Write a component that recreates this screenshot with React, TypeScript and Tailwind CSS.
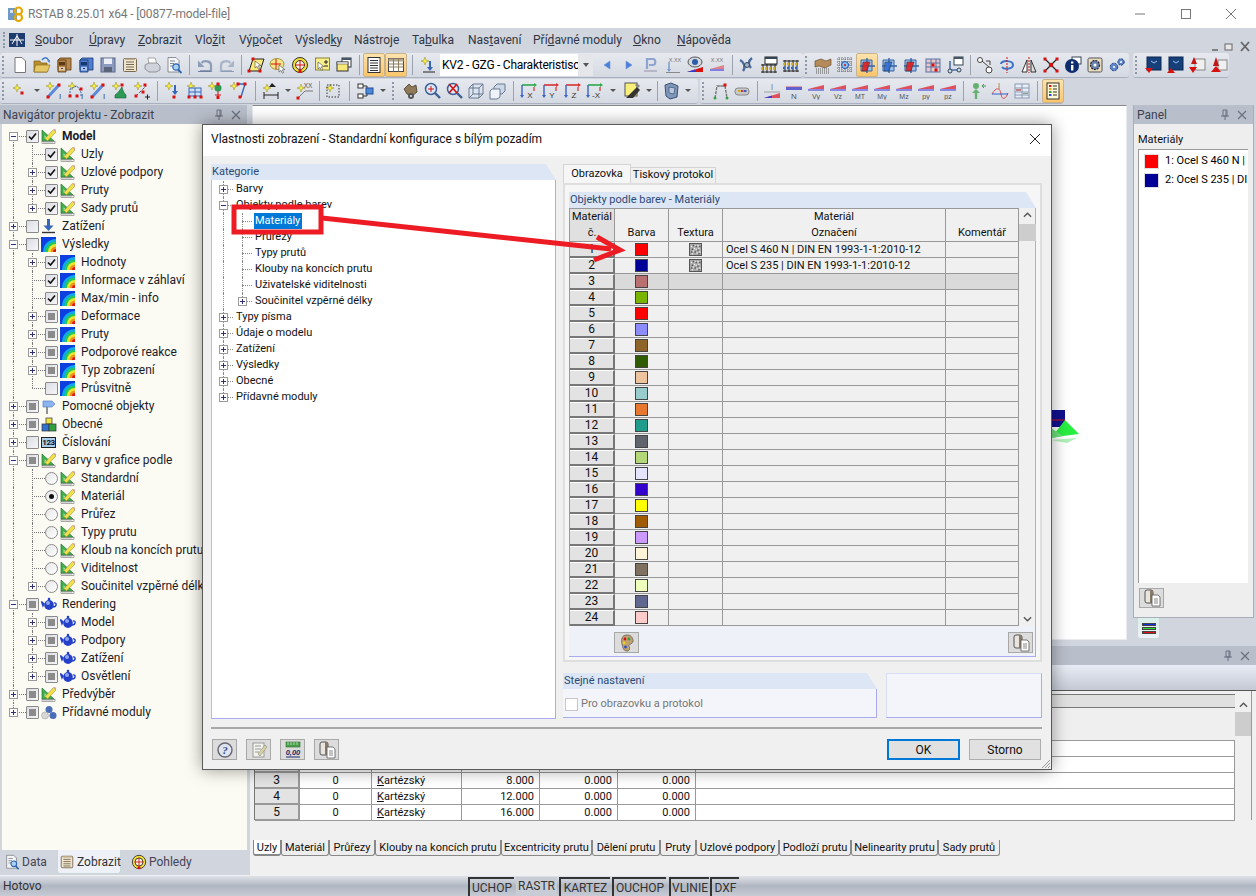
import type { ReactNode } from 'react';

const N = (x: number, y: number, c = '#d81010') => <rect x={x - 1.5} y={y - 1.5} width="3" height="3" fill={c} />;
const S = (x: number, y: number) => (
  <path
    d={`M${x} ${y - 4}L${x + 1} ${y - 1}L${x + 4} ${y}L${x + 1} ${y + 1}L${x} ${y + 4}L${x - 1} ${y + 1}L${x - 4} ${y}L${x - 1} ${y - 1}Z`}
    fill="#f8ee3c"
    stroke="#a39a3a"
    strokeWidth=".6"
  />
);
const T = (x: number, y: number, t: string, c = '#555', s = 7) => (
  <text x={x} y={y} fontSize={s} fill={c} textAnchor="middle" fontFamily="Liberation Sans, sans-serif">{t}</text>
);
const Cur = (x: number, y: number) => <path d={`M${x} ${y}l0 7l2-1.6l1.4 2.8l1.3-.7l-1.4-2.7l2.6-.3z`} fill="#fff" stroke="#444" strokeWidth=".6" />;
const Wedge = (c1 = '#e0505a', c2 = '#6a6ae0') => (
  <g>
    <path d="M1 7L17 3V7Z" fill={c1} />
    <path d="M1 7H17V9H1Z" fill={c2} opacity=".75" />
  </g>
);
const Force = (t: string) => (
  <g>
    {Wedge()}
    {T(9, 16.5, t, '#555', 7)}
  </g>
);
const Drawer = (c: string, d: string) => (
  <g>
    <path d="M5 2H16V14H3V4Z" fill={c} stroke={d} strokeWidth=".8" />
    <path d="M3 4H11V16H3Z" fill={c} stroke={d} strokeWidth=".8" />
    <rect x="4" y="6" width="6" height="3.5" fill={d} />
    <rect x="4" y="11" width="6" height="3.5" fill="#fff" opacity=".55" />
    <rect x="6" y="12" width="2" height="1" fill={d} />
  </g>
);
const Rot = (c: string) => (
  <g>
    <path d="M3 4H14V15H3Z" fill="#9cc0ea" stroke="#3465a4" />
    <path d="M9 2V17M2 10H17" stroke="#3465a4" strokeWidth="1.4" />
    <path d="M5 6H12L9 15H4Z" fill={c} opacity=".9" stroke="#222" strokeWidth=".5" />
  </g>
);
const Axis = (t: string, c: string) => (
  <g>
    <path d="M3 3H15" stroke={c} strokeWidth="1.6" />
    <path d="M15 1l3 2-3 2z" fill={c} />
    <path d="M3 3V14" stroke="#3b62c4" strokeWidth="1.4" />
    <path d="M1 13l2 3 2-3z" fill="#3b62c4" />
    <path d="M15 5V9" stroke="#d83030" strokeWidth="1.2" />
    {T(11, 16, t, '#333', 8)}
  </g>
);

const icons: Record<string, ReactNode> = {
  new: <path d="M4 1.5H11L14.5 5V16.5H4Z" fill="#fff" stroke="#777" />,
  open: (
    <g>
      <path d="M1 5H7L8 7H14V16H1Z" fill="#b98f2e" stroke="#7a5b16" strokeWidth=".7" />
      <path d="M2.5 9H17L14.5 16H1Z" fill="#e6c765" stroke="#8e6d20" strokeWidth=".7" />
      <path d="M9 4C11 1 14 1 15.5 4" stroke="#3a78c8" strokeWidth="1.5" fill="none" />
      <path d="M14 4.5l3-.5-.5 3z" fill="#3a78c8" />
    </g>
  ),
  chest: Drawer('#b8864b', '#5a3a12'),
  chestb: Drawer('#4f7fd0', '#17366f'),
  save: (
    <g>
      <rect x="2" y="2" width="14" height="14" fill="#8c9bc0" stroke="#5a6684" />
      <rect x="5" y="2.5" width="8" height="5.5" fill="#eef0f6" />
      <rect x="5" y="11" width="8" height="5" fill="#5b6478" />
    </g>
  ),
  note: (
    <g>
      <rect x="2.5" y="2.5" width="13" height="13" rx="1" fill="#efe4cf" stroke="#7a6a50" />
      <path d="M5 6H13M5 8.5H13M5 11H13M5 13.5H13" stroke="#7a6a50" />
      <path d="M4 2.5H14V4H4Z" fill="#bfae8f" />
    </g>
  ),
  print: (
    <g>
      <path d="M5 2H12L14 8H6Z" fill="#fff" stroke="#888" strokeWidth=".7" />
      <path d="M2 9L6 7H14L17 10V14L13 16H6L2 13Z" fill="#cfd2da" stroke="#777" strokeWidth=".7" />
    </g>
  ),
  preview: (
    <g>
      <path d="M3 1.5H11L14 4.5V16H3Z" fill="#f4f6fa" stroke="#777" strokeWidth=".8" />
      <path d="M5 5H10M5 7.5H9M5 10H8" stroke="#888" />
      <circle cx="11" cy="11" r="3.2" fill="#a9d2f5" stroke="#2c62b0" strokeWidth="1.2" />
      <path d="M13 13.5L16.5 17" stroke="#2c62b0" strokeWidth="1.8" />
    </g>
  ),
  undo: (
    <g>
      <path d="M4 15H15V9C15 5 8 4 5.5 7" stroke="#8d9db8" strokeWidth="2.2" fill="none" />
      <path d="M2 4.5V11H8.5Z" fill="#8d9db8" />
      <path d="M2 15.5H15" stroke="#6f7f9b" />
    </g>
  ),
  redo: (
    <g>
      <path d="M14 15H3V9C3 5 10 4 12.5 7" stroke="#a8b4c8" strokeWidth="2.2" fill="none" />
      <path d="M16 4.5V11H9.5Z" fill="#a8b4c8" />
      <path d="M3 15.5H16" stroke="#8e9cb4" />
    </g>
  ),
  para: (
    <g>
      <path d="M6 3H17L13 15H2Z" fill="#f7ea7a" stroke="#222" />
      {N(6, 3)}
      {N(2, 15)}
      {N(13, 15)}
      {Cur(8, 5)}
    </g>
  ),
  look1: (
    <g>
      <ellipse cx="8" cy="8" rx="7" ry="5.5" fill="#f6e88a" stroke="#a5973e" />
      <path d="M7 3V13M2 8H12" stroke="#d81010" />
      {Cur(10, 9)}
    </g>
  ),
  look2: (
    <g>
      <circle cx="9" cy="9" r="7.5" fill="#f4e034" stroke="#333" />
      <circle cx="9" cy="9" r="4.5" fill="#f6f6e8" stroke="#333" />
      <path d="M9 4V14M4 9H14" stroke="#d81010" />
      {N(9, 15.5)}
    </g>
  ),
  yplus: (
    <g>
      <rect x="2.5" y="2" width="14" height="12" fill="#f8ee8a" stroke="#8d8432" />
      {Cur(5, 6)}
      <path d="M11 6H15M13 4V8M11 10H15" stroke="#222" />
    </g>
  ),
  wins: (
    <g>
      <rect x="7" y="2" width="9" height="9" fill="#fff" stroke="#333" />
      <rect x="7" y="2" width="9" height="2" fill="#456" />
      <rect x="2" y="6" width="11" height="9" fill="#f6e97a" stroke="#333" />
      <rect x="2" y="6" width="11" height="2" fill="#fff" stroke="#333" strokeWidth=".5" />
    </g>
  ),
  list: (
    <g>
      <rect x="3" y="1.5" width="12" height="15" fill="#fff" stroke="#333" />
      <path d="M5 4.5H13M5 7H13M5 9.5H13M5 12H13M5 14.5H13" stroke="#333" />
    </g>
  ),
  grid: (
    <g>
      <rect x="1.5" y="2.5" width="15" height="13" fill="#fff" stroke="#444" />
      <rect x="1.5" y="2.5" width="15" height="3" fill="#b3a58e" />
      <path d="M1.5 8H16.5M1.5 11H16.5M6.5 2.5V15.5M11.5 2.5V15.5" stroke="#8a7a60" />
    </g>
  ),
  loadS: (
    <g>
      {S(6, 5)}
      <path d="M11 5V12" stroke="#3766b8" strokeWidth="2" />
      <path d="M8 11H14L11 15Z" fill="#3766b8" />
      <path d="M4 16H16" stroke="#222" />
    </g>
  ),
  left: <path d="M12 5V13L6 9Z" fill="#4a80e0" stroke="#6f93d0" strokeWidth=".6" />,
  right: <path d="M6 5V13L12 9Z" fill="#4a80e0" stroke="#6f93d0" strokeWidth=".6" />,
  pin: (
    <g>
      <path d="M5 13V3H11C14 3 14 9 11 9H7" stroke="#8ea6cf" strokeWidth="2.2" fill="none" />
      <path d="M2 15H15" stroke="#aab" strokeWidth="1.5" />
    </g>
  ),
  xxd: (
    <g>
      {T(11, 6, 'X.XX', '#777', 5.5)}
      <path d="M5 6V14" stroke="#7a9ad0" strokeWidth="1.5" />
      <path d="M3 13H7L5 16Z" fill="#7a9ad0" />
      <path d="M2 16.5H16" stroke="#888" />
    </g>
  ),
  eye: (
    <g>
      <ellipse cx="9" cy="6" rx="7" ry="5" fill="#d5d8e0" stroke="#555" />
      <circle cx="9" cy="6" r="3" fill="#2d5ca8" />
      <path d="M1 16L17 11V16Z" fill="#d81010" />
      <path d="M1 16L9 13.5V16Z" fill="#2d3fd0" />
    </g>
  ),
  xxw: (
    <g>
      {T(9, 6, 'X.XX', '#777', 5.5)}
      <path d="M2 13L16 9V13Z" fill="#e08088" />
      <path d="M2 13H16V15H2Z" fill="#8080e0" />
    </g>
  ),
  tube: (
    <g>
      <path d="M2 4C6 6 8 11 5 15M14 2C10 5 10 9 13 12" stroke="#4a6a9a" strokeWidth="2.4" fill="none" />
      <circle cx="9" cy="9" r="2.5" fill="#9ab0cf" stroke="#345" />
    </g>
  ),
  calc1: (
    <g>
      <rect x="5" y="1" width="12" height="7" fill="#fff" stroke="#222" />
      <rect x="5" y="1" width="12" height="2" fill="#345" />
      <path d="M1 9H17M1 16H17" stroke="#222" />
      <path d="M3 8V17M7 8V17M11 8V17M15 8V17" stroke="#222" />
      <path d="M1 12.5H17" stroke="#d8b020" strokeWidth="2.4" strokeDasharray="2 2" />
    </g>
  ),
  calc2: (
    <g>
      <path d="M1 5H17M1 15H17" stroke="#222" />
      <path d="M3 4V16M7 4V16M11 4V16M15 4V16" stroke="#222" />
      <path d="M1 8H17" stroke="#d8b020" strokeWidth="2.4" strokeDasharray="2 2" />
      <path d="M1 12H17" stroke="#3766b8" strokeWidth="2.4" strokeDasharray="2 2" />
    </g>
  ),
  hands: (
    <g>
      <path d="M1 5L7 3L12 5L17 3V9L11 12L5 10L1 11Z" fill="#b68b5a" stroke="#5c3d1c" strokeWidth=".6" />
      <path d="M2 13H16M2 15H16M2 17H16" stroke="#555" strokeDasharray="1 1" />
    </g>
  ),
  gridp: (
    <g>
      <path d="M1 3H17M1 6H17M1 9H17M1 12H17M1 15H17M3 1V17M6 1V17M9 1V17M12 1V17M15 1V17" stroke="#666" strokeDasharray="1 1" />
      <circle cx="9" cy="9" r="3.5" fill="#8cc0f0" stroke="#1f50b0" />
      <circle cx="9" cy="9" r="1" fill="#d81010" />
    </g>
  ),
  rot1: Rot('#e02020'),
  rot2: Rot('#3070d8'),
  rot3: Rot('#e02020'),
  rot4: (
    <g>
      <rect x="2" y="3" width="14" height="13" fill="#e6c8c8" stroke="#5a72a8" />
      <path d="M2 7H16M2 11H16M7 3V16M12 3V16" stroke="#5a72a8" />
      {N(9, 9)}
      {N(12, 14)}
    </g>
  ),
  rot5: (
    <g>
      <rect x="8" y="1" width="9" height="8" fill="#fff" stroke="#345" />
      <rect x="8" y="1" width="9" height="2" fill="#456" />
      <path d="M4 5V14H12" stroke="#4a6fb0" strokeWidth="1.6" fill="none" />
      <circle cx="4" cy="15" r="2" fill="#cdd" stroke="#345" />
      <circle cx="13" cy="14" r="2" fill="#cdd" stroke="#345" />
    </g>
  ),
  link: (
    <g>
      <circle cx="4" cy="4" r="2.5" fill="#fff" stroke="#444" />
      <circle cx="13" cy="14" r="3" fill="#fff" stroke="#444" />
      <path d="M6 5L13 11" stroke="#444" />
      <path d="M10 5H14V9" stroke="#444" fill="none" />
    </g>
  ),
  spin: (
    <g>
      <path d="M3 8C3 4 15 4 15 9C15 13 6 14 4 11" stroke="#3b74c8" strokeWidth="2" fill="none" />
      <path d="M9 1V17" stroke="#d81010" strokeDasharray="2 1" />
    </g>
  ),
  mirror: (
    <g>
      <path d="M7 4L2 16H7Z" fill="#fff" stroke="#333" />
      <path d="M11 4L16 16H11Z" fill="#ddd" stroke="#333" />
      <path d="M9 1V17" stroke="#d81010" strokeDasharray="2 1" />
    </g>
  ),
  cross: (
    <g>
      <path d="M3 3L15 15M15 3L3 15" stroke="#222" strokeWidth="1.2" />
      {N(3, 3)}
      {N(15, 3)}
      {N(3, 15)}
      {N(15, 15)}
      <circle cx="9" cy="9" r="2.2" fill="#d81010" />
    </g>
  ),
  info: (
    <g>
      <rect x="8" y="1" width="9" height="7" fill="#fff" stroke="#345" />
      <circle cx="8" cy="10" r="7" fill="#0f2d6e" />
      <rect x="7" y="9" width="2.4" height="5.5" fill="#fff" />
      <rect x="7" y="5.5" width="2.4" height="2" fill="#fff" />
    </g>
  ),
  gear: (
    <g>
      <rect x="2" y="2" width="14" height="14" rx="1.5" fill="#e8dcc0" stroke="#555" />
      <circle cx="9" cy="9" r="4.5" fill="#6a82b0" stroke="#222" strokeWidth="1.2" strokeDasharray="2 1" />
      <circle cx="9" cy="9" r="1.5" fill="#fff" />
    </g>
  ),
  gears: (
    <g>
      <circle cx="6" cy="11" r="3.8" fill="#5f86c8" stroke="#24447e" strokeDasharray="2 1" />
      <circle cx="13" cy="6" r="3.2" fill="#5f86c8" stroke="#24447e" strokeDasharray="2 1" />
      <circle cx="6" cy="11" r="1" fill="#fff" />
      <circle cx="13" cy="6" r="1" fill="#fff" />
    </g>
  ),
  iD: (
    <g>
      <rect x="3" y="1" width="14" height="13" fill="#173f7a" stroke="#0d2750" />
      <path d="M7 5L10 7L13 5" stroke="#9cc4f0" fill="none" />
      <path d="M1 12H9L5 17Z" fill="#d81010" />
    </g>
  ),
  iU: (
    <g>
      <rect x="3" y="1" width="14" height="13" fill="#173f7a" stroke="#0d2750" />
      <path d="M7 5L10 7L13 5" stroke="#9cc4f0" fill="none" />
      <path d="M1 17H9L5 12Z" fill="#d81010" />
    </g>
  ),
  pD: (
    <g>
      <rect x="7" y="3" width="10" height="11" fill="#f0f0f0" stroke="#888" />
      <path d="M6 1L9 8H3Z" fill="#c01818" />
      <path d="M1 11H9L5 17Z" fill="#d81010" />
    </g>
  ),
  pU: (
    <g>
      <rect x="8" y="4" width="9" height="10" fill="#f0f0f0" stroke="#888" />
      <path d="M6 1L9 10H3Z" fill="#c01818" />
      <path d="M1 16H11L6 10Z" fill="#d81010" />
    </g>
  ),
  s1: <g>{S(6, 6)}{N(11, 11)}</g>,
  beam: (
    <g>
      {S(5, 4)}
      <path d="M3 15L14 3" stroke="#5a8ad8" strokeWidth="3" />
      {N(3, 15)}
      {N(14, 3)}
      {T(15, 17, 'I', '#444', 8)}
    </g>
  ),
  nodes: (
    <g>
      {S(5, 4)}
      <path d="M3 14V7L10 4L14 10V14" stroke="#3766b8" fill="none" strokeDasharray="2 1" />
      {N(3, 14)}
      {N(10, 14)}
      {N(14, 7)}
      {T(15, 17, 'I', '#444', 8)}
    </g>
  ),
  green: (
    <g>
      {S(5, 4)}
      {N(11, 3)}
      <path d="M11 5C8 9 7 11 4 13V16H15V13C13 11 12 9 11 5Z" fill="#2c9a55" stroke="#17603a" strokeWidth=".6" />
    </g>
  ),
  sparkLine: (
    <g>
      {S(5, 4)}
      <path d="M3 14L13 4" stroke="#555" strokeDasharray="3 1.5" />
      {N(12, 3)}
      {N(3, 14)}
      {N(10, 10)}
      <path d="M12 15H17M14.5 12.5V17.5" stroke="#222" />
    </g>
  ),
  sLoad: (
    <g>
      {S(5, 4)}
      <path d="M11 3V10" stroke="#3766b8" strokeWidth="2" />
      <path d="M8 9H14L11 13Z" fill="#3766b8" />
      {N(10, 15)}
    </g>
  ),
  sFrame: (
    <g>
      {S(5, 4)}
      <rect x="3" y="6" width="12" height="8" fill="#cfe0f6" stroke="#3766b8" />
      <path d="M9 6V14M3 10H15" stroke="#3766b8" />
      {N(3, 15)}
      {N(9, 15)}
      {N(15, 15)}
    </g>
  ),
  sTree: (
    <g>
      {S(4, 4)}
      <circle cx="10" cy="6" r="3.5" fill="#2c9a55" />
      {N(10, 2)}
      <path d="M10 9V15M7 13H13" stroke="#d81010" />
      {N(10, 15.5)}
    </g>
  ),
  sColumn: (
    <g>
      {S(4, 4)}
      <path d="M8 2H15L11 15" stroke="#3766b8" fill="none" strokeWidth="1.4" />
      {N(8, 2)}
      {N(15, 2)}
      {N(10, 15)}
    </g>
  ),
  dim: (
    <g>
      {S(5, 6)}
      <path d="M2 10V17M16 10V17" stroke="#222" />
      <path d="M2 13H16" stroke="#222" />
      <path d="M10 1L14 5H7Z" fill="#222" />
    </g>
  ),
  sXX: (
    <g>
      {S(5, 6)}
      {T(12, 6, 'XX', '#555', 6.5)}
      <path d="M2 16L9 9H17" stroke="#777" fill="none" />
      {N(2, 16)}
    </g>
  ),
  sBox: (
    <g>
      {S(6, 6)}
      <rect x="3" y="3" width="12" height="12" fill="none" stroke="#333" strokeDasharray="1.5 1.5" />
    </g>
  ),
  flow: (
    <g>
      <rect x="1" y="2" width="5" height="4" fill="#fff" stroke="#333" />
      <rect x="1" y="12" width="5" height="4" fill="#fff" stroke="#333" />
      <path d="M6 4H10V7M6 14H10V11" stroke="#333" fill="none" />
      <rect x="9" y="6" width="7" height="6" fill="#4a8ad8" stroke="#244a94" />
    </g>
  ),
  hand: (
    <g>
      <path d="M3 7L8 2L11 5L15 3L16 10L11 14L6 12Z" fill="#8f7a5a" stroke="#3a2c18" strokeWidth=".7" />
      <circle cx="10" cy="14" r="3" fill="#555" />
      <circle cx="10" cy="14" r="1" fill="#eee" />
    </g>
  ),
  zoomRed: (
    <g>
      <circle cx="8" cy="7" r="5.5" fill="#dbe8f7" stroke="#3d5f96" strokeWidth="1.5" />
      <path d="M12 11L17 16" stroke="#3d5f96" strokeWidth="2.4" />
      <path d="M8 4V10M5 7H11" stroke="#d81010" />
    </g>
  ),
  zoomX: (
    <g>
      <circle cx="8" cy="7" r="5.5" fill="#dbe8f7" stroke="#3d5f96" strokeWidth="1.5" />
      <path d="M12 11L17 16" stroke="#3d5f96" strokeWidth="2.4" />
      <path d="M4 2L12 11M12 2L4 11" stroke="#d81010" strokeWidth="1.6" />
    </g>
  ),
  cube: (
    <g>
      <path d="M6 2H16V12L12 16H2V6Z" fill="#dce4ef" stroke="#6a7a90" />
      <path d="M6 2V12H16M6 12L2 16M2 6H12V16M12 6L16 2" fill="none" stroke="#6a7a90" />
    </g>
  ),
  cubes: (
    <g>
      <path d="M8 2H16V9L13 12H5V5Z" fill="#ccd8ea" stroke="#6a7a90" />
      <path d="M3 7H11V15L8 17H1V9Z" fill="#eef3f9" stroke="#6a7a90" />
    </g>
  ),
  ax: Axis('X', '#2fa84e'),
  ay: Axis('Y', '#d83030'),
  az: Axis('Z', '#d83030'),
  amx: Axis('-X', '#2fa84e'),
  paint: (
    <g>
      <rect x="2" y="1" width="12" height="13" fill="#f8ee7a" stroke="#555" />
      <path d="M3 16L14 5L17 8L10 16Z" fill="#333" />
      <path d="M14 1L17 4L15 6L12 3Z" fill="#888" />
    </g>
  ),
  seat: (
    <g>
      <path d="M3 3L9 1L16 4L15 15L8 17L4 14Z" fill="#7f97b8" stroke="#3a5072" />
      <path d="M7 5L13 6L12 12L7 11Z" fill="#b9c7da" stroke="#3a5072" strokeWidth=".7" />
    </g>
  ),
  frame: (
    <g>
      <path d="M4 16L6 4H14L16 16" stroke="#777" fill="none" strokeWidth="1.4" strokeDasharray="3 1" />
      <path d="M6 4H14" stroke="#999" strokeWidth="1.4" />
      {N(14, 3)}
      <circle cx="4" cy="16" r="1.5" fill="#3aa04a" />
      <circle cx="16" cy="16" r="1.5" fill="#3aa04a" />
    </g>
  ),
  tag: (
    <g>
      <rect x="2" y="6" width="14" height="7" rx="3" fill="#c8c8c8" stroke="#888" />
      <rect x="5" y="8" width="2.5" height="2" fill="#d8b020" />
      <rect x="8" y="8" width="2.5" height="2" fill="#c04040" />
      <rect x="11" y="8" width="2.5" height="2" fill="#4060c0" />
    </g>
  ),
  dI: (
    <g>
      {T(9, 8, 'I', '#888', 9)}
      <path d="M1 16L17 11V16Z" fill="#e0505a" />
      <path d="M1 16L9 13.5V16Z" fill="#4040d0" />
      <path d="M1 10H17" stroke="#a0a0a0" />
    </g>
  ),
  dN: (
    <g>
      <rect x="1" y="4" width="16" height="2" fill="#e08088" opacity=".7" />
      <rect x="1" y="5" width="16" height="3" fill="#6060d0" />
      {T(9, 16.5, 'N', '#555', 8)}
    </g>
  ),
  vy: Force('Vy'),
  vz: Force('Vz'),
  mt: Force('MT'),
  my: Force('My'),
  mz: Force('Mz'),
  py: Force('py'),
  pz: Force('pz'),
  greenUp: (
    <g>
      <circle cx="7" cy="4" r="3" fill="#66b070" />
      <path d="M13 4H17M13 4l2-2M13 4l2 2" stroke="#449955" fill="none" />
      <path d="M7 8V17" stroke="#66b070" strokeWidth="2.4" />
      <path d="M3 11L7 7L11 11Z" fill="#66b070" />
    </g>
  ),
  wave: (
    <g>
      {T(8, 7, 'I', '#888', 9)}
      <path d="M1 12C5 5 9 5 10 12S15 17 17 11" stroke="#d85050" fill="none" />
      <path d="M1 12H17" stroke="#3060d0" />
    </g>
  ),
  table: (
    <g>
      <rect x="2" y="2" width="14" height="14" fill="#e8eef7" stroke="#8a9ab2" />
      <path d="M2 6H16M2 10H16M2 13H16M9 2V16" stroke="#8a9ab2" />
      <rect x="3" y="7" width="5" height="2" fill="#c08080" />
      <rect x="10" y="11" width="5" height="1" fill="#80a080" />
    </g>
  ),
  legend: (
    <g>
      <rect x="3" y="1" width="12" height="16" fill="#fff8d8" stroke="#333" />
      <rect x="5" y="3" width="2.5" height="2" fill="#d81010" />
      <rect x="5" y="6" width="2.5" height="2" fill="#e8a020" />
      <rect x="5" y="9" width="2.5" height="2" fill="#30a040" />
      <rect x="5" y="12" width="2.5" height="2" fill="#2050d0" />
      <path d="M9 4H13M9 7H13M9 10H13M9 13H13" stroke="#333" />
    </g>
  ),
};

const sepW: Record<string, string> = {
  s5: 'w-[5px]',
  s6: 'w-[6px]',
  s7: 'w-[7px]',
  s8: 'w-[8px]',
  s9: 'w-[9px]',
  s10: 'w-[10px]',
  s11: 'w-[11px]',
};
const dropW: Record<string, string> = {
  d10: 'w-[10px]',
  d11: 'w-[11px]',
  d12: 'w-[12px]',
  d16: 'w-[16px]',
};

function ToolItems({ items }: { items: string[] }) {
  return (
    <>
      {items.map((it, i) => {
        if (sepW[it]) {
          return (
            <div key={i} className={`${sepW[it]} h-[20px] flex justify-center shrink-0`}>
              <div className="w-px h-full bg-[#9aa2b0]" />
            </div>
          );
        }
        if (dropW[it]) {
          return (
            <div key={i} className={`${dropW[it]} h-[22px] flex items-center justify-center shrink-0`}>
              <div className="w-0 h-0 border-x-[3px] border-x-transparent border-t-[3px] border-t-[#555]" />
            </div>
          );
        }
        if (it === 'grip') {
          return (
            <div key={i} className="w-[6px] ml-[2px] mr-px h-[20px] flex flex-col justify-center gap-[2px] shrink-0">
              {[0, 1, 2, 3, 4].map((n) => (
                <div key={n} className="w-[2px] h-[2px] bg-[#8f97a6]" />
              ))}
            </div>
          );
        }
        const active = it.startsWith('*');
        const name = active ? it.slice(1) : it;
        return (
          <div
            key={i}
            className={`w-[22px] h-[24px] flex items-center justify-center shrink-0 ${
              active ? 'bg-gradient-to-b from-[#fde3ad] to-[#fbc56a] border border-[#c9b38a] rounded-[2px]' : ''
            }`}
          >
            <svg viewBox="0 0 18 18" className="w-[18px] h-[18px]">
              {icons[name]}
            </svg>
          </div>
        );
      })}
    </>
  );
}

const Band = ({ w, children }: { w: string; children: ReactNode }) => (
  <div className={`${w} h-[25px] flex items-center bg-gradient-to-b from-[#e6e9ef] to-[#d5d9e2] border-b border-[#aab0bd] rounded-[3px] shrink-0`}>
    {children}
  </div>
);

function Toolbars() {
  return (
    <div className="flex flex-col">
      <div className="flex h-[26px] items-center">
        <Band w="w-[803px]">
          <ToolItems items={['grip', 'new', 'open', 'chest', 'chestb', 'save', 'note', 'print', 'preview', 's9', 'undo', 'redo', 's7', 'para', 'look1', 'look2', 'yplus', 'wins', 's8', '*list', '*grid', 's10', 'loadS']} />
          <div className="w-[153px] h-[22px] ml-px flex items-center bg-white shrink-0 overflow-hidden">
            <div className="w-[138px] pl-[2px] text-[12px] tracking-[-0.25px] text-black whitespace-nowrap overflow-hidden shrink-0">KV2 - GZG - Charakteristisc</div>
            <div className="w-[15px] h-full bg-[#e4e6ea] flex items-center justify-center">
              <div className="w-0 h-0 border-x-[3px] border-x-transparent border-t-[4px] border-t-[#555]" />
            </div>
          </div>
          <div className="w-[3px] shrink-0" />
          <ToolItems items={['left', 'right', 'pin', 'xxd', 'eye', 'xxw', 's8', 'tube', 'calc1', 'calc2']} />
        </Band>
        <Band w="w-[326px]">
          <ToolItems items={['grip', 'hands', 'gridp', '*rot1', 'rot2', 'rot3', 'rot4', 'rot5', 's8', 'link', 'spin', 'mirror', 'cross', 'info', 'gear', 'gears']} />
        </Band>
        <div className="w-[4px] shrink-0" />
        <Band w="w-[96px]">
          <ToolItems items={['grip', 'iD', 'iU', 'pD', 'pU']} />
        </Band>
      </div>
      <div className="flex h-[26px] items-center">
        <Band w="w-[698px]">
          <ToolItems items={['grip', 's1', 'd12', 'beam', 'nodes', 'beam', 'green', 'sparkLine', 's9', 'sLoad', 'sFrame', 'sTree', 'sColumn', 's10', 'dim', 'd12', 'sXX', 's6', 'sBox', 's11', 'flow', 'd11']} />
          <div className="w-[2px] shrink-0" />
          <ToolItems items={['grip', 'hand', 'zoomRed', 'zoomX', 'cube', 'cubes', 's8', 'ax', 'ay', 'az', 'amx', 'd16', 'paint', 'd12', 's5', 'seat', 'd12']} />
        </Band>
        <div className="w-[2px] shrink-0" />
        <Band w="w-[363px]">
          <ToolItems items={['grip', 'frame', 'tag', 's8', 'dI', 'dN', 'vy', 'vz', 'mt', 'my', 'mz', 'py', 'pz', 's8', 'greenUp', 'wave', 'table', 's9', '*legend']} />
        </Band>
      </div>
    </div>
  );
}

const Pencil = () => (
  <svg viewBox="0 0 15 16" className="w-[15px] h-[16px] shrink-0">
    <path d="M1 2V13H13Z" fill="#3fae4b" stroke="#2a7a34" strokeWidth=".7" />
    <path d="M3.5 7V11H7.5Z" fill="#a5dca8" />
    <path d="M4 10.5L12.5 1.5L15 4L6.5 13Z" fill="#f2e04a" stroke="#8d8432" strokeWidth=".5" />
    <path d="M12.5 1.5L15 4L15.500 2.500L14 1Z" fill="#e59ab0" />
    <rect x="1" y="13.5" width="13" height="2" fill="#fff" stroke="#555" strokeWidth=".5" />
    <path d="M3 13.5V15M5 13.5V15M7 13.5V15M9 13.5V15M11 13.5V15" stroke="#555" strokeWidth=".5" />
  </svg>
);
const Rainbow = () => (
  <svg viewBox="0 0 15 15" className="w-[15px] h-[15px] shrink-0">
    <rect width="15" height="15" fill="#0c3ee0" />
    <circle cx="15" cy="15" r="13" fill="#10a8e8" />
    <circle cx="15" cy="15" r="10.5" fill="#22c85a" />
    <circle cx="15" cy="15" r="8" fill="#e8e830" />
    <circle cx="15" cy="15" r="5.5" fill="#f09020" />
    <circle cx="15" cy="15" r="3" fill="#e01818" />
  </svg>
);
const Teapot = () => (
  <svg viewBox="0 0 16 14" className="w-[16px] h-[14px] shrink-0">
    <ellipse cx="8" cy="8" rx="4.8" ry="5" fill="#2440c8" />
    <ellipse cx="7" cy="6" rx="2" ry="2" fill="#8fa4ee" />
    <path d="M3 7L0.5 4.5L2 9ZM13 6C16 5 16 10 12 10" fill="none" stroke="#2440c8" strokeWidth="1.4" />
    <circle cx="8" cy="2" r="1.3" fill="#2440c8" />
  </svg>
);
const LoadIco = () => (
  <svg viewBox="0 0 15 15" className="w-[15px] h-[15px] shrink-0">
    <path d="M7.5 0V8" stroke="#3766b8" strokeWidth="3" />
    <path d="M2.5 6.5H12.5L7.5 12Z" fill="#3766b8" />
    <path d="M1 13.5H14" stroke="#333" strokeWidth="1.4" />
  </svg>
);
const SignIco = () => (
  <svg viewBox="0 0 15 15" className="w-[15px] h-[15px] shrink-0">
    <path d="M2 2H11L14 5L11 8H2Z" fill="#8cb4f0" stroke="#5a7ec0" strokeWidth=".7" />
    <path d="M6 8V15" stroke="#777" strokeWidth="1.6" />
  </svg>
);
const BlocksIco = () => (
  <svg viewBox="0 0 16 15" className="w-[16px] h-[15px] shrink-0">
    <rect x="5" y="1" width="6" height="6" fill="#f0e040" stroke="#333" strokeWidth=".7" />
    <rect x="1" y="7" width="7" height="7" fill="#3070d0" stroke="#333" strokeWidth=".7" />
    <rect x="8" y="7" width="7" height="7" fill="#30a040" stroke="#333" strokeWidth=".7" />
  </svg>
);
const NumIco = () => (
  <div className="w-[15px] h-[11px] shrink-0 bg-[#a9cdec] border border-[#222] text-[8px] leading-[9px] font-bold text-[#111] text-center tracking-[-0.5px] overflow-hidden">123</div>
);
const AddonIco = () => (
  <svg viewBox="0 0 16 15" className="w-[16px] h-[15px] shrink-0">
    <circle cx="8" cy="4.5" r="3.5" fill="#4a6fb8" />
    <circle cx="4" cy="10.5" r="3.5" fill="#d8d8d8" stroke="#999" strokeWidth=".5" />
    <circle cx="12" cy="10.5" r="3.5" fill="#4a6fb8" />
  </svg>
);

const Expander = ({ open }: { open?: boolean }) => (
  <div className="w-[9px] h-[9px] border border-[#9a9a9a] bg-white flex items-center justify-center relative shrink-0">
    <div className="w-[5px] h-px bg-[#30307a]" />
    {!open && <div className="absolute w-px h-[5px] bg-[#30307a]" />}
  </div>
);

const Check = ({ kind }: { kind: string }) => {
  if (kind === 'r' || kind === 'R') {
    return (
      <div className="w-[13px] h-[13px] rounded-full border border-[#8a8a8a] bg-gradient-to-br from-[#e6e6e6] to-white flex items-center justify-center shrink-0">
        {kind === 'R' && <div className="w-[5px] h-[5px] rounded-full bg-[#111]" />}
      </div>
    );
  }
  return (
    <div className="w-[13px] h-[13px] border border-[#8a8a8a] rounded-[1px] bg-gradient-to-br from-[#dcdde4] to-[#f6f6f8] flex items-center justify-center shrink-0">
      {kind === 'c' && (
        <svg viewBox="0 0 11 11" className="w-[11px] h-[11px]">
          <path d="M2 5.5L4.5 8L9 2.5" stroke="#111" strokeWidth="1.6" fill="none" />
        </svg>
      )}
      {kind === 'i' && <div className="w-[7px] h-[7px] bg-[#8b8b8b]" />}
    </div>
  );
};

type NavRow = { l: 0 | 1; t: string; c: string; i: string; e?: '+' | '-'; last?: boolean; b?: boolean };

const navRows: NavRow[] = [
  { l: 0, t: 'Model', c: 'c', i: 'p', e: '-', b: true },
  { l: 1, t: 'Uzly', c: 'c', i: 'p' },
  { l: 1, t: 'Uzlové podpory', c: 'c', i: 'p', e: '+' },
  { l: 1, t: 'Pruty', c: 'c', i: 'p', e: '+' },
  { l: 1, t: 'Sady prutů', c: 'c', i: 'p', e: '+', last: true },
  { l: 0, t: 'Zatížení', c: 'e', i: 'l', e: '+' },
  { l: 0, t: 'Výsledky', c: 'e', i: 'a', e: '-' },
  { l: 1, t: 'Hodnoty', c: 'c', i: 'a', e: '+' },
  { l: 1, t: 'Informace v záhlaví', c: 'c', i: 'a' },
  { l: 1, t: 'Max/min - info', c: 'c', i: 'a' },
  { l: 1, t: 'Deformace', c: 'i', i: 'a', e: '+' },
  { l: 1, t: 'Pruty', c: 'i', i: 'a', e: '+' },
  { l: 1, t: 'Podporové reakce', c: 'i', i: 'a', e: '+' },
  { l: 1, t: 'Typ zobrazení', c: 'i', i: 'a', e: '+' },
  { l: 1, t: 'Průsvitně', c: 'e', i: 'a', last: true },
  { l: 0, t: 'Pomocné objekty', c: 'i', i: 's', e: '+' },
  { l: 0, t: 'Obecné', c: 'i', i: 'b', e: '+' },
  { l: 0, t: 'Číslování', c: 'e', i: 'n', e: '+' },
  { l: 0, t: 'Barvy v grafice podle', c: 'i', i: 'p', e: '-' },
  { l: 1, t: 'Standardní', c: 'r', i: 'p' },
  { l: 1, t: 'Materiál', c: 'R', i: 'p' },
  { l: 1, t: 'Průřez', c: 'r', i: 'p' },
  { l: 1, t: 'Typy prutu', c: 'r', i: 'p' },
  { l: 1, t: 'Kloub na koncích prutu', c: 'r', i: 'p' },
  { l: 1, t: 'Viditelnost', c: 'r', i: 'p' },
  { l: 1, t: 'Součinitel vzpěrné délky', c: 'r', i: 'p', e: '+', last: true },
  { l: 0, t: 'Rendering', c: 'i', i: 't', e: '-' },
  { l: 1, t: 'Model', c: 'i', i: 't', e: '+' },
  { l: 1, t: 'Podpory', c: 'i', i: 't', e: '+' },
  { l: 1, t: 'Zatížení', c: 'i', i: 't', e: '+' },
  { l: 1, t: 'Osvětlení', c: 'i', i: 't', e: '+', last: true },
  { l: 0, t: 'Předvýběr', c: 'i', i: 'p', e: '+' },
  { l: 0, t: 'Přídavné moduly', c: 'i', i: 'm', e: '+', last: true },
];

const navIcon = (i: string) => {
  if (i === 'p') return <Pencil />;
  if (i === 'a') return <Rainbow />;
  if (i === 't') return <Teapot />;
  if (i === 'l') return <LoadIco />;
  if (i === 's') return <SignIco />;
  if (i === 'b') return <BlocksIco />;
  if (i === 'n') return <NumIco />;
  return <AddonIco />;
};

function NavTree() {
  return (
    <div className="pt-[3px]">
      {navRows.map((r, idx) => {
        const first = idx === 0;
        const last = idx === navRows.length - 1;
        return (
          <div key={idx} className="h-[18px] relative flex items-center text-[12px] leading-[18px] text-[#1c1c28] whitespace-nowrap">
            {/* dotted guides of the tree */}
            <div className={`absolute left-[11px] w-px border-l border-dotted border-[#777] ${first ? 'top-[9px] bottom-0' : last ? 'top-0 h-[9px]' : 'top-0 bottom-0'}`} />
            {r.l === 1 && <div className={`absolute left-[30px] w-px border-l border-dotted border-[#777] top-0 ${r.last ? 'h-[9px]' : 'bottom-0'}`} />}
            <div className={`absolute top-[9px] h-px border-t border-dotted border-[#777] ${r.l === 0 ? 'left-[11px] w-[13px]' : 'left-[30px] w-[13px]'}`} />
            <div className={`${r.l === 0 ? 'w-[24px]' : 'w-[43px]'} h-full flex items-center justify-end shrink-0`}>
              {r.e && (
                <div className={r.l === 0 ? 'mr-[8px]' : 'mr-[8px] relative'}>
                  <Expander open={r.e === '-'} />
                </div>
              )}
            </div>
            <div className="relative flex items-center">
              <Check kind={r.c} />
              <div className="w-[15px] ml-[2px] flex justify-center">{navIcon(r.i)}</div>
            </div>
            <span className={`ml-[6px] relative ${r.b ? 'font-bold' : ''}`}>{r.t}</span>
          </div>
        );
      })}
    </div>
  );
}

function Nav() {
  return (
    <div className="w-[247px] shrink-0 flex flex-col">
      <div className="h-[19px] mt-px bg-[#b9bfca] flex items-center pl-[3px] text-[12px] text-[#3c4250]">
        <span className="flex-1">Navigátor projektu - Zobrazit</span>
        <PinClose />
      </div>
      <div className="flex-1 ml-[2px] bg-[#fbfbf3] overflow-hidden">
        <NavTree />
      </div>
      <div className="h-[25px] flex items-start pl-[3px] text-[12px] text-[#333]">
        <NavTab label="Data" w="w-[46px]" ico="preview" />
        <div className="w-[8px]" />
        <NavTab label="Zobrazit" w="w-[64px]" ico="note" active />
        <div className="w-[9px]" />
        <NavTab label="Pohledy" w="w-[60px]" ico="look2" />
      </div>
    </div>
  );
}

const NavTab = ({ label, w, ico, active }: { label: string; w: string; ico: string; active?: boolean }) => (
  <div className={`${w} h-[24px] flex items-center gap-[2px] pl-px rounded-b-[3px] whitespace-nowrap ${active ? 'bg-[#eef1f7] border-x border-b border-[#c8d8d8]' : ''}`}>
    <svg viewBox="0 0 18 18" className="w-[16px] h-[16px] shrink-0">
      {icons[ico]}
    </svg>
    <span className={active ? 'text-[#333]' : 'text-[#445]'}>{label}</span>
  </div>
);

const PinClose = () => (
  <div className="flex items-center gap-[7px] pr-[3px]">
    <svg viewBox="0 0 10 12" className="w-[10px] h-[12px]">
      <path d="M3 1H7V7H3ZM1 7H9M5 7V11M6 1V7" stroke="#6a7080" fill="none" />
    </svg>
    <svg viewBox="0 0 10 10" className="w-[10px] h-[10px] mr-[3px]">
      <path d="M1 1L9 9M9 1L1 9" stroke="#6a7080" strokeWidth="1.2" />
    </svg>
  </div>
);

const dlgIcons: Record<string, ReactNode> = {
  barrel: (
    <g>
      <rect x="2" y="1" width="8" height="13" rx="2" fill="#e8e4de" stroke="#555" />
      <rect x="7" y="1" width="3" height="13" fill="#8a7a6a" />
      <path d="M9 6H15L17 8V17H9Z" fill="#fff" stroke="#555" strokeWidth=".8" />
      <path d="M11 10H15M11 12H15M11 14H15" stroke="#555" strokeWidth=".7" />
    </g>
  ),
  palette: (
    <g>
      <path d="M9 1C4 1 3 5 4 10S6 17 9 17S12 14 11 12S16 10 15 6S12 1 9 1Z" fill="#c0a070" stroke="#555" strokeWidth=".7" />
      <circle cx="7" cy="5" r="1.4" fill="#d81010" />
      <circle cx="11" cy="5" r="1.4" fill="#30a040" />
      <circle cx="6" cy="9" r="1.4" fill="#f0d020" />
      <circle cx="7.5" cy="13" r="1.4" fill="#2050d0" />
    </g>
  ),
  help: (
    <g>
      <circle cx="9" cy="9" r="7" fill="#dfe4ee" stroke="#667" strokeWidth="1.4" />
      <text x="9" y="13" fontSize="11" fontWeight="bold" fontStyle="italic" fill="#2d4a80" textAnchor="middle" fontFamily="Liberation Serif, serif">?</text>
    </g>
  ),
  edit: (
    <g>
      <rect x="3" y="2" width="11" height="14" fill="#f2f2ea" stroke="#999" />
      <path d="M5 5H11M5 8H11M5 11H9" stroke="#999" />
      <path d="M8 13L15 4L17 6L10 15Z" fill="#d8d4a0" stroke="#888" strokeWidth=".6" />
    </g>
  ),
  units: (
    <g>
      <rect x="2" y="1" width="14" height="5" fill="#4aa04a" stroke="#2a702a" strokeWidth=".6" />
      <path d="M4 1V4M7 1V4M10 1V4M13 1V4" stroke="#d8f0d8" strokeWidth=".7" />
      <text x="9" y="14" fontSize="7.5" fontStyle="italic" fontWeight="bold" fill="#1a2a6a" textAnchor="middle" fontFamily="Liberation Sans, sans-serif">0,00</text>
      <path d="M2 16H16" stroke="#1a2a6a" />
    </g>
  ),
};

const Tool = ({ kind, sm }: { kind: string; sm?: string }) => (
  <div className={`${sm ?? 'w-[25px] h-[21px]'} border border-[#a8a8a8] bg-[#dcdcdc] flex items-center justify-center shrink-0`}>
    <svg viewBox="0 0 18 18" className="w-[18px] h-[18px]">
      {dlgIcons[kind]}
    </svg>
  </div>
);

const swatches = ['#ff0000', '#000099', '#b87070', '#78b400', '#ff0000', '#8c8cff', '#8f6428', '#305c00', '#eec49f', '#99cccc', '#e87830', '#1f9c8c', '#60646c', '#b4d878', '#e4e4ff', '#3300cc', '#ffff00', '#a05c00', '#cc99ff', '#fff4d8', '#807060', '#eeffbb', '#606890', '#ffcccc'];

const Texture = () => (
  <svg viewBox="0 0 12 12" className="w-[13px] h-[13px] border border-[#555]">
    <rect width="12" height="12" fill="#a8a8a8" />
    {[
      [1, 2], [3, 7], [5, 1], [7, 9], [9, 4], [2, 10], [10, 8], [6, 5], [4, 4], [8, 1],
    ].map(([x, y]) => (
      <rect key={`${x}-${y}`} x={x} y={y} width="1.5" height="1.5" fill="#eee" />
    ))}
    {[
      [2, 5], [5, 8], [8, 6], [10, 2], [1, 8], [6, 2], [3, 1], [9, 10],
    ].map(([x, y]) => (
      <rect key={`${x}-${y}`} x={x} y={y} width="1.5" height="1.5" fill="#555" />
    ))}
  </svg>
);

function MaterialTable() {
  const cell = 'border-r border-b border-[#999]';
  return (
    <div className="w-[450px] shrink-0 border-l border-t border-[#999] text-[11px] text-[#111]">
      <div className="flex h-[33px] leading-[16px] text-center">
        <div className={`${cell} w-[45px] bg-[#e0e0e0] shrink-0`}>
          Materiál
          <br />č.
        </div>
        <div className={`${cell} w-[54px] flex items-end justify-center shrink-0`}>Barva</div>
        <div className={`${cell} w-[54px] flex items-end justify-center shrink-0`}>Textura</div>
        <div className={`${cell} w-[223px] shrink-0`}>
          Materiál
          <br />
          Označení
        </div>
        <div className={`${cell} w-[73px] flex items-end justify-center shrink-0`}>Komentář</div>
      </div>
      {swatches.map((c, i) => {
        const name = i === 0 ? 'Ocel S 460 N | DIN EN 1993-1-1:2010-12' : i === 1 ? 'Ocel S 235 | DIN EN 1993-1-1:2010-12' : '';
        return (
          <div key={i} className={`flex h-[16px] leading-[15px] ${i === 2 ? 'bg-[#dadada]' : ''}`}>
            <div className="w-[45px] shrink-0 bg-[#e3e3e3] border-r-2 border-b-2 border-[#777] border-t border-t-white text-center text-[12px] leading-[13px]">{i + 1}</div>
            <div className={`${cell} w-[54px] flex items-center justify-center shrink-0`}>
              <div className="w-[13px] h-[13px] border border-[#444]" style={{ backgroundColor: c }} />
            </div>
            <div className={`${cell} w-[54px] flex items-center justify-center shrink-0`}>{i < 2 && <Texture />}</div>
            <div className={`${cell} w-[223px] pl-[3px] whitespace-nowrap shrink-0`}>{name}</div>
            <div className={`${cell} w-[73px] shrink-0`} />
          </div>
        );
      })}
    </div>
  );
}

const SectionHead = ({ label, className }: { label: string; className: string }) => (
  <div className={`${className} h-[16px] bg-[#dce6f4] text-[11px] leading-[16px] pl-px text-[#2b4a78] [clip-path:polygon(0_0,calc(100%-10px)_0,100%_100%,0_100%)]`}>{label}</div>
);

const catRows: { l: number; t: string; e?: '+' | '-'; sel?: boolean; last?: boolean }[] = [
  { l: 0, t: 'Barvy', e: '+' },
  { l: 0, t: 'Objekty podle barev', e: '-' },
  { l: 1, t: 'Materiály', sel: true },
  { l: 1, t: 'Průřezy' },
  { l: 1, t: 'Typy prutů' },
  { l: 1, t: 'Klouby na koncích prutu' },
  { l: 1, t: 'Uživatelské viditelnosti' },
  { l: 1, t: 'Součinitel vzpěrné délky', e: '+', last: true },
  { l: 0, t: 'Typy písma', e: '+' },
  { l: 0, t: 'Údaje o modelu', e: '+' },
  { l: 0, t: 'Zatížení', e: '+' },
  { l: 0, t: 'Výsledky', e: '+' },
  { l: 0, t: 'Obecné', e: '+' },
  { l: 0, t: 'Přídavné moduly', e: '+', last: true },
];

function Dialog() {
  return (
    <div className="absolute left-[202px] top-[124px] w-[850px] h-[646px] bg-[#f0f0f0] border border-[#5a5a5a] shadow-[0_0_16px_rgba(0,0,0,0.4)] flex flex-col text-[#111]">
      <div className="h-[31px] bg-white flex items-center pl-[8px] pr-[8px] pb-[3px] text-[12px] shrink-0">
        <span className="flex-1">Vlastnosti zobrazení - Standardní konfigurace s bílým pozadím</span>
        <svg viewBox="0 0 12 12" className="w-[12px] h-[12px] mr-[2px]">
          <path d="M1 1L11 11M11 1L1 11" stroke="#222" />
        </svg>
      </div>
      <div className="flex pl-[8px] pt-[8px] gap-[7px] shrink-0">
        <div className="w-[345px] h-[555px] flex flex-col shrink-0">
          <SectionHead label="Kategorie" className="w-full" />
          <div className="flex-1 bg-white border-l border-[#c0c0c0] border-r border-r-[#aaaaee] border-b border-b-[#aaaaee] pt-px text-[11px] relative">
            {catRows.map((r, i) => (
              <div key={i} className="h-[16px] relative flex items-center whitespace-nowrap leading-[16px]">
                {i < 13 && <div className="absolute left-[11px] top-0 bottom-0 border-l border-dotted border-[#888]" />}
                {i === 13 && <div className="absolute left-[11px] top-0 h-[8px] border-l border-dotted border-[#888]" />}
                {r.l === 1 && <div className={`absolute left-[30px] top-0 border-l border-dotted border-[#888] ${r.last ? 'h-[8px]' : 'bottom-0'}`} />}
                <div className={`absolute top-[8px] w-[10px] border-t border-dotted border-[#888] ${r.l === 0 ? 'left-[11px]' : 'left-[30px]'}`} />
                {r.e && (
                  <div className={`relative ${r.l === 0 ? 'ml-[7px]' : 'ml-[26px]'}`}>
                    <Expander open={r.e === '-'} />
                  </div>
                )}
                <span
                  className={`absolute ${r.l === 0 ? 'left-[24px]' : 'left-[43px]'} ${r.sel ? 'bg-[#0078d7] text-white pr-[2px] pl-px -ml-px' : ''}`}
                >
                  {r.t}
                </span>
              </div>
            ))}
          </div>
        </div>
        <div className="w-[479px] h-[555px] flex flex-col shrink-0">
          <div className="h-[20px] flex items-end text-[11px] shrink-0">
            <div className="w-[68px] h-[20px] bg-[#f6f6f6] border border-b-0 border-[#d4d4d4] flex items-center justify-center">Obrazovka</div>
            <div className="w-[85px] h-[17px] bg-[#f0f0f0] border border-l-0 border-[#d4d4d4] flex items-center justify-center">Tiskový protokol</div>
          </div>
          <div className="h-[479px] border-2 border-[#dedede] bg-[#f6f6f6] pl-[4px] pr-[4px] pt-[7px] shrink-0 -mt-px">
            <SectionHead label="Objekty podle barev - Materiály" className="w-full" />
            <div className="flex border-r border-[#aaaaee] bg-[#f0f0f0]">
              <MaterialTable />
              <div className="w-[17px] h-[418px] flex flex-col items-center pt-[4px] shrink-0">
                <svg viewBox="0 0 10 6" className="w-[9px] h-[6px]">
                  <path d="M1 5L5 1L9 5" stroke="#555" strokeWidth="1.5" fill="none" />
                </svg>
                <div className="w-full h-[17px] mt-[6px] bg-[#cdcdcd]" />
                <div className="flex-1" />
                <svg viewBox="0 0 10 6" className="w-[9px] h-[6px] mb-[4px]">
                  <path d="M1 1L5 5L9 1" stroke="#555" strokeWidth="1.5" fill="none" />
                </svg>
              </div>
            </div>
            <div className="h-[31px] bg-[#eef2f8] border-r border-b border-[#aaaaee] flex items-start pt-[6px] pl-[45px] pr-[2px]">
              <Tool kind="palette" />
              <div className="flex-1" />
              <Tool kind="barrel" />
            </div>
          </div>
          <div className="flex mt-[11px] gap-[9px]">
            <div className="w-[314px] h-[45px] flex flex-col">
              <SectionHead label="Stejné nastavení" className="w-full" />
              <div className="flex-1 bg-[#f3f5fa] border-r border-b border-[#aaaaee] flex items-center pl-[2px] pt-[2px] gap-[3px] text-[11px] text-[#777]">
                <div className="w-[13px] h-[13px] bg-white border border-[#c8c8c8]" />
                Pro obrazovku a protokol
              </div>
            </div>
            <div className="w-[156px] h-[45px] bg-[#f3f5fa] border border-[#d8dcf4] border-r-[#aaaaee] border-b-[#aaaaee]" />
          </div>
        </div>
      </div>
      <div className="h-[2px] mt-[8px] ml-[8px] mr-[9px] bg-[#a8a8a8] shrink-0" />
      <div className="flex items-start pl-[9px] pr-[10px] mt-[10px] gap-[9px] text-[12px]">
        <Tool kind="help" />
        <Tool kind="edit" />
        <Tool kind="units" />
        <Tool kind="barrel" />
        <div className="flex-1" />
        <div className="w-[73px] h-[21px] border-2 border-[#0078d7] bg-[#e1e1e1] flex items-center justify-center">OK</div>
        <div className="w-[72px] h-[21px] border border-[#adadad] bg-[#e1e1e1] flex items-center justify-center">Storno</div>
      </div>
      <svg viewBox="0 0 12 12" className="absolute right-0 bottom-0 w-[12px] h-[12px]">
        <path d="M11 3L3 11M11 6L6 11M11 9L9 11" stroke="#999" />
      </svg>
    </div>
  );
}

// the red markup somebody drew over the dialog
const Annotation = () => (
  <svg className="absolute left-0 top-0 w-[1256px] h-[896px] pointer-events-none" viewBox="0 0 1256 896">
    <rect x="234" y="207" width="87" height="25" fill="none" stroke="#ed1c24" strokeWidth="5" />
    <path d="M322 218L611 249" stroke="#ed1c24" strokeWidth="5" />
    <path d="M597 237L620 250L594 260" stroke="#ed1c24" strokeWidth="5" fill="none" />
  </svg>
);

const nodeRows = [
  ['1', '0', 'Kartézský', '0.000', '0.000', '0.000'],
  ['2', '0', 'Kartézský', '4.000', '0.000', '0.000'],
  ['3', '0', 'Kartézský', '8.000', '0.000', '0.000'],
  ['4', '0', 'Kartézský', '12.000', '0.000', '0.000'],
  ['5', '0', 'Kartézský', '16.000', '0.000', '0.000'],
];

const bottomTabs = [
  { t: 'Uzly', w: 'w-[28px]', a: true },
  { t: 'Materiál', w: 'w-[48px]' },
  { t: 'Průřezy', w: 'w-[46px]' },
  { t: 'Klouby na koncích prutu', w: 'w-[126px]' },
  { t: 'Excentricity prutu', w: 'w-[91px]' },
  { t: 'Dělení prutu', w: 'w-[68px]' },
  { t: 'Pruty', w: 'w-[36px]' },
  { t: 'Uzlové podpory', w: 'w-[83px]' },
  { t: 'Podloží prutu', w: 'w-[72px]' },
  { t: 'Nelinearity prutu', w: 'w-[87px]' },
  { t: 'Sady prutů', w: 'w-[62px]' },
];

function BottomPanel() {
  const cell = 'border-r border-b border-[#999] h-[16px] leading-[15px] shrink-0';
  return (
    <div className="flex-1 flex flex-col mt-px mr-[2px] bg-[#f0f0f0] min-h-0">
      <div className="h-[19px] bg-[#b9bfca] flex items-center justify-end shrink-0">
        <PinClose />
      </div>
      <div className="h-[25px] bg-gradient-to-b from-[#e8ecf5] to-[#c4c9d4] shrink-0" />
      <div className="flex px-[4px] h-[130px] border-t border-[#555] shrink-0">
        <div className="w-[981px] shrink-0 mt-[3px] border-l border-t border-[#777] text-[11px] text-[#111] bg-white">
          <div className="h-[13px] bg-[#e0e0e0] border-b border-[#777]" />
          <div className="h-[33px] bg-[#efefef] border-b border-[#999]" />
          {nodeRows.map((r) => (
            <div key={r[0]} className="flex">
              <div className={`${cell} w-[45px] bg-[#e3e3e3] text-center text-[12px] leading-[13px] border-r-2 border-b-2 border-[#777]`}>{r[0]}</div>
              <div className={`${cell} w-[72px] text-center`}>{r[1]}</div>
              <div className={`${cell} w-[90px] pl-[5px]`}>
                <span className="underline">K</span>artézský
              </div>
              <div className={`${cell} w-[78px] text-right pr-[5px]`}>{r[3]}</div>
              <div className={`${cell} w-[78px] text-right pr-[5px]`}>{r[4]}</div>
              <div className={`${cell} w-[78px] text-right pr-[5px]`}>{r[5]}</div>
              <div className={`${cell} flex-1`} />
            </div>
          ))}
        </div>
        <div className="w-[17px] flex flex-col items-center pt-[11px] shrink-0 border-r border-[#999]">
          <svg viewBox="0 0 10 6" className="w-[9px] h-[6px]">
            <path d="M1 5L5 1L9 5" stroke="#555" strokeWidth="1.5" fill="none" />
          </svg>
          <div className="w-full h-[24px] mt-[4px] bg-[#cdcdcd]" />
        </div>
      </div>
      <div className="flex pl-[3px] mt-[20px] text-[11px] text-[#111] h-[16px]">
        {bottomTabs.map((t) => (
          <div
            key={t.t}
            className={`${t.w} shrink-0 text-center leading-[15px] whitespace-nowrap border-r border-b border-l border-[#888] rounded-b-[3px] ${t.a ? 'bg-white border-b-2' : 'bg-[#ededed]'}`}
          >
            {t.t}
          </div>
        ))}
      </div>
    </div>
  );
}

const statusBtns = [
  { t: 'UCHOP', w: 'w-[46px] ml-0' },
  { t: 'RASTR', w: 'w-[41px] ml-[2px]', on: true },
  { t: 'KARTEZ', w: 'w-[51px] ml-[2px]' },
  { t: 'OUCHOP', w: 'w-[54px] ml-[2px]' },
  { t: 'VLINIE', w: 'w-[40px] ml-[3px]' },
  { t: 'DXF', w: 'w-[29px] ml-px' },
];

const menus = [
  ['', 'S', 'oubor', 'w-[54px]'],
  ['', 'Ú', 'pravy', 'w-[49px]'],
  ['', 'Z', 'obrazit', 'w-[57px]'],
  ['Vlo', 'ž', 'it', 'w-[44px]'],
  ['Vý', 'p', 'očet', 'w-[56px]'],
  ['Výsled', 'k', 'y', 'w-[59px]'],
  ['Nástro', 'j', 'e', 'w-[58px]'],
  ['Ta', 'b', 'ulka', 'w-[56px]'],
  ['Nas', 't', 'avení', 'w-[65px]'],
  ['Pří', 'd', 'avné moduly', 'w-[100px]'],
  ['', 'O', 'kno', 'w-[44px]'],
  ['', 'N', 'ápověda', 'w-[60px]'],
];

function App() {
  return (
    <div className="w-[1256px] h-[896px] relative overflow-hidden bg-[#d0d5de] flex flex-col font-['Roboto',sans-serif] text-[12px]">
      <div className="h-[28px] bg-white flex items-center shrink-0 pl-[8px]">
        <svg viewBox="0 0 16 16" className="w-[16px] h-[16px]">
          <rect x="0" y="2" width="9" height="12" fill="#6f9ac8" />
          <rect x="2" y="4" width="3" height="3" fill="#cfe2f5" />
          <circle cx="10.5" cy="5" r="3.5" fill="none" stroke="#e8a800" strokeWidth="2.2" />
          <circle cx="10.5" cy="11.5" r="3.5" fill="none" stroke="#e8a800" strokeWidth="2.2" />
        </svg>
        <span className="ml-[4px] text-[12px] tracking-[-0.15px] text-[#777] flex-1">RSTAB 8.25.01 x64 - [00877-model-file]</span>
        <svg viewBox="0 0 10 10" className="w-[10px] h-[10px] mr-[36px]">
          <path d="M0 5H10" stroke="#777" />
        </svg>
        <svg viewBox="0 0 10 10" className="w-[10px] h-[10px] mr-[35px]">
          <rect x=".5" y=".5" width="9" height="9" fill="none" stroke="#777" />
        </svg>
        <svg viewBox="0 0 10 10" className="w-[10px] h-[10px] mr-[20px]">
          <path d="M0 0L10 10M10 0L0 10" stroke="#777" />
        </svg>
      </div>
      <div className="h-[24px] flex items-center shrink-0 pl-[3px] text-[12px] text-[#2f3644]">
        <div className="w-[3px] h-[16px] border-l-2 border-dotted border-[#8f97a6]" />
        <svg viewBox="0 0 16 14" className="w-[16px] h-[14px] ml-[3px]">
          <rect width="16" height="14" fill="#1d3b6f" />
          <path d="M8 1V13M1 7H15M3 11L8 3L13 11" stroke="#fff" fill="none" />
        </svg>
        <div className="flex ml-[10px]">
          {menus.map(([a, u, b, w]) => (
            <span key={a + u + b} className={`${w} whitespace-nowrap`}>
              {a}
              <span className="underline">{u}</span>
              {b}
            </span>
          ))}
        </div>
        <div className="flex-1" />
        <svg viewBox="0 0 40 12" className="w-[40px] h-[12px] mr-[4px] mt-[14px]">
          <path d="M0 9H6" stroke="#666" strokeWidth="1.5" />
          <rect x="13" y="3" width="7" height="6" fill="#e8e8e8" stroke="#666" />
          <path d="M29 1L37 10M37 1L29 10" stroke="#666" strokeWidth="1.8" />
        </svg>
      </div>
      <Toolbars />
      <div className="flex-1 flex min-h-0">
        <Nav />
        <div className="w-[3px] shrink-0" />
        <div className="flex-1 flex flex-col min-h-0">
          <div className="h-[541px] flex shrink-0 pl-[2px] pb-[5px]">
            <div className="w-[875px] mt-px bg-white border border-[#e8eaf0] border-t-[#888] relative shrink-0">
              <svg viewBox="0 0 30 40" className="absolute left-[798px] top-[304px] w-[30px] h-[40px]">
                <rect x="0" y="0" width="14" height="17" fill="#101090" />
                <path d="M0 10H14" stroke="#d81010" />
                <path d="M0 28L14 10L28 24L12 26Z" fill="#28ee40" />
                <path d="M0 18L12 26L0 28Z" fill="#70e080" />
                <path d="M0 30L26 28L16 33Z" fill="#b0f0b8" />
              </svg>
            </div>
            <div className="w-[6px] shrink-0" />
            <div className="w-[121px] flex flex-col shrink-0">
              <div className="h-[513px] mt-px bg-[#eeeeee] border-x border-b border-[#a8adb8] flex flex-col shrink-0">
                <div className="h-[19px] bg-[#b9bfca] flex items-center pl-[3px] text-[12px] text-[#3c4250] shrink-0">
                  <span className="flex-1">Panel</span>
                  <PinClose />
                </div>
                <div className="pl-[4px] pt-[9px] text-[11px] text-[#111] leading-[13px]">Materiály</div>
                <div className="h-[434px] ml-[4px] mr-[5px] mt-[3px] bg-white border-l border-t border-[#999] overflow-hidden text-[11px] whitespace-nowrap pt-[2px] pl-[5px] shrink-0">
                  <div className="h-[19px] flex items-center gap-[6px]">
                    <div className="w-[15px] h-[15px] bg-[#ff0000] border border-[#ddd] shrink-0" />
                    <span>1: Ocel S 460 N |</span>
                  </div>
                  <div className="h-[19px] flex items-center gap-[6px]">
                    <div className="w-[15px] h-[15px] bg-[#000099] border border-[#ddd] shrink-0" />
                    <span>2: Ocel S 235 | DI</span>
                  </div>
                </div>
                <div className="ml-[5px] mt-[5px]">
                  <Tool kind="barrel" sm="w-[25px] h-[20px]" />
                </div>
              </div>
              <div className="ml-[4px] w-[23px] h-[21px] bg-gradient-to-b from-[#d8f0ea] to-[#eef1f5] border-x border-b border-[#c8d8d8] rounded-b-[3px] flex flex-col items-center justify-center gap-px">
                <div className="w-[14px] h-[3px] bg-[#1030e0] border border-[#444]" />
                <div className="w-[14px] h-[3px] bg-[#20e020] border border-[#444]" />
                <div className="w-[14px] h-[3px] bg-[#e01010] border border-[#444]" />
              </div>
            </div>
          </div>
          <BottomPanel />
        </div>
      </div>
      <div className="h-[21px] flex items-center shrink-0 pl-[3px] bg-gradient-to-b from-[#dfe2e8] via-[#b0b6c2] to-[#c6cbd4] text-[12px] text-[#333] border-t border-[#eef0f4]">
        <span className="w-[465px] shrink-0">Hotovo</span>
        {statusBtns.map((b) => (
          <div
            key={b.t}
            className={`${b.w} h-[19px] shrink-0 mt-px text-center leading-[18px] whitespace-nowrap ${b.on ? 'bg-[#c8ccd4]' : 'border-l-2 border-t-2 border-[#333]'}`}
          >
            {b.t}
          </div>
        ))}
      </div>
      <Dialog />
      <Annotation />
    </div>
  );
}

export default App;
